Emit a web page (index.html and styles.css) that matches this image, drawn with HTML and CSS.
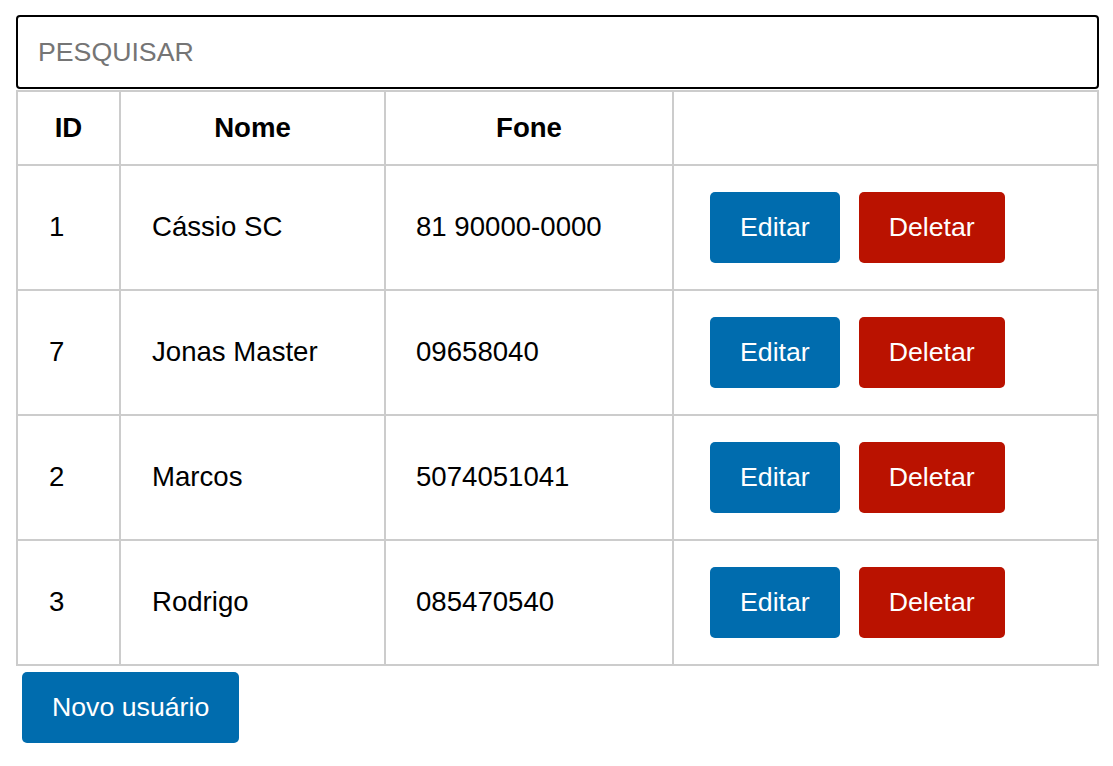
FILE: index.html
```html
<!DOCTYPE html>
<html lang="pt-BR">
<head>
<meta charset="utf-8">
<title>Usuários</title>
<link rel="stylesheet" href="styles.css">
</head>
<body>
<div class="page">
  <input class="search" type="text" placeholder="PESQUISAR" autofocus>
  <table class="users">
    <colgroup>
      <col class="c-id"><col class="c-nome"><col class="c-fone"><col class="c-acoes">
    </colgroup>
    <thead>
      <tr><th>ID</th><th>Nome</th><th>Fone</th><th></th></tr>
    </thead>
    <tbody>
      <tr><td>1</td><td>Cássio SC</td><td>81 90000-0000</td><td class="actions"><button class="btn btn-edit">Editar</button><button class="btn btn-del">Deletar</button></td></tr>
      <tr><td>7</td><td>Jonas Master</td><td>09658040</td><td class="actions"><button class="btn btn-edit">Editar</button><button class="btn btn-del">Deletar</button></td></tr>
      <tr><td>2</td><td>Marcos</td><td>5074051041</td><td class="actions"><button class="btn btn-edit">Editar</button><button class="btn btn-del">Deletar</button></td></tr>
      <tr><td>3</td><td>Rodrigo</td><td>085470540</td><td class="actions"><button class="btn btn-edit">Editar</button><button class="btn btn-del">Deletar</button></td></tr>
    </tbody>
  </table>
  <button class="btn btn-edit btn-new">Novo usuário</button>
</div>
</body>
</html>
```
FILE: styles.css
```css
* { box-sizing: border-box; }
html, body { margin: 0; background: #fff; }
body {
  font-family: "Liberation Sans", Arial, sans-serif;
  color: #000;
  padding: 15px 14px 0 16px;
}
.page { width: 1083px; }
.search {
  display: block;
  width: 1083px;
  height: 74px;
  border: 2px solid #000;
  border-radius: 4px;
  padding: 0 20px;
  font-family: "Liberation Sans", Arial, sans-serif;
  font-size: 26.7px;
  color: #000;
  outline: none;
  caret-color: #000;
}
.search::placeholder { color: #757575; }
.users {
  margin-top: 1px;
  width: 1083px;
  border-collapse: collapse;
  font-size: 27.6px;
}
.c-id { width: 103px; }
.c-nome { width: 265px; }
.c-fone { width: 288px; }
.users th, .users td {
  border: 2px solid #cccccc;
}
.users th {
  height: 74px;
  font-weight: bold;
  text-align: center;
  padding: 0 0 1px;
}
.users td {
  height: 125px;
  padding: 0 0 2px 31px;
  text-align: left;
}
.users td:nth-child(3) { padding-left: 30px; }
.users td.actions { padding: 0 0 0 36px; }
.btn {
  height: 71px;
  padding: 0 30px;
  border: none;
  border-radius: 5px;
  font-family: "Liberation Sans", Arial, sans-serif;
  font-size: 26.7px;
  color: #fff;
  cursor: pointer;
  vertical-align: middle;
}
.btn-edit { background: #006cae; }
.btn-del { background: #ba1200; margin-left: 19px; }
.btn-new { margin: 6px 0 0 6px; display: block; }
```
